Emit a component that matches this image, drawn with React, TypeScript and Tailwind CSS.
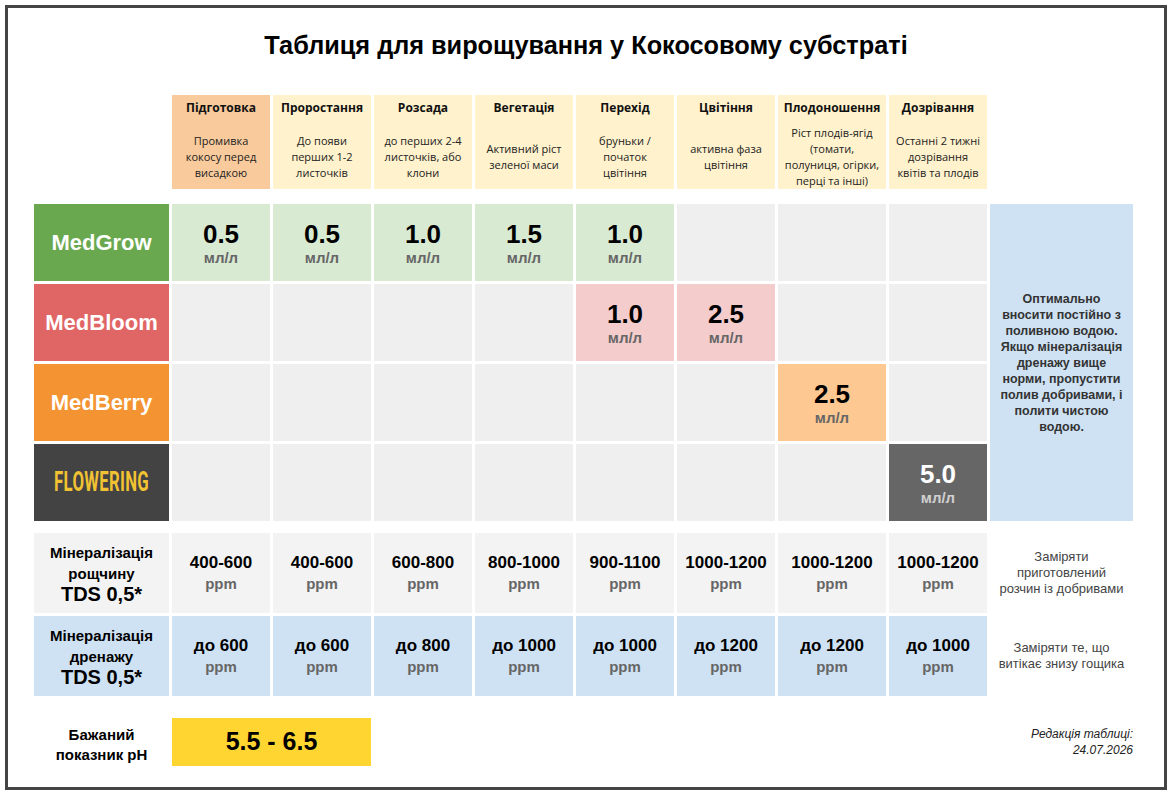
const stages = [
  { title: "Підготовка", lines: ["Промивка", "кокосу перед", "висадкою"], accent: true },
  { title: "Проростання", lines: ["До появи", "перших 1-2", "листочків"] },
  { title: "Розсада", lines: ["до перших 2-4", "листочків, або", "клони"] },
  { title: "Вегетація", lines: ["Активний ріст", "зеленої маси"] },
  { title: "Перехід", lines: ["бруньки /", "початок", "цвітіння"] },
  { title: "Цвітіння", lines: ["активна фаза", "цвітіння"] },
  { title: "Плодоношення", lines: ["Ріст плодів-ягід", "(томати,", "полуниця, огірки,", "перці та інші)"] },
  { title: "Дозрівання", lines: ["Останні 2 тижні", "дозрівання", "квітів та плодів"] },
];

type Product = {
  name: string;
  labelClass: string;
  cellClass: string;
  doses: (string | null)[];
  dark?: boolean;
};

const products: Product[] = [
  {
    name: "MedGrow",
    labelClass: "bg-[#6aa84f] text-white",
    cellClass: "bg-[#d9ead3]",
    doses: ["0.5", "0.5", "1.0", "1.5", "1.0", null, null, null],
  },
  {
    name: "MedBloom",
    labelClass: "bg-[#e06666] text-white",
    cellClass: "bg-[#f4cccc]",
    doses: [null, null, null, null, "1.0", "2.5", null, null],
  },
  {
    name: "MedBerry",
    labelClass: "bg-[#f39332] text-white",
    cellClass: "bg-[#fdc891]",
    doses: [null, null, null, null, null, null, "2.5", null],
  },
  {
    name: "FLOWERING",
    labelClass: "bg-[#434343] text-[#f1c232]",
    cellClass: "bg-[#666666]",
    doses: [null, null, null, null, null, null, null, "5.0"],
    dark: true,
  },
];

const solution = ["400-600", "400-600", "600-800", "800-1000", "900-1100", "1000-1200", "1000-1200", "1000-1200"];
const drainage = ["до 600", "до 600", "до 800", "до 1000", "до 1000", "до 1200", "до 1200", "до 1000"];

const noteLines = [
  "Оптимально",
  "вносити постійно з",
  "поливною водою.",
  "Якщо мінералізація",
  "дренажу вище",
  "норми, пропустити",
  "полив добривами, і",
  "полити чистою",
  "водою.",
];

const grid = "grid grid-cols-[135px_repeat(6,98px)_108px_98px_143px] gap-[3px]";

function Dose({ value, dark }: { value: string; dark?: boolean }) {
  return (
    <div className="flex flex-col items-center">
      <span className={`text-[26px] font-bold leading-[30px] ${dark ? "text-white" : "text-black"}`}>{value}</span>
      <span className={`text-[15px] font-bold leading-[18px] ${dark ? "text-[#d0d0d0]" : "text-[#666]"}`}>мл/л</span>
    </div>
  );
}

function Reading({ value }: { value: string }) {
  return (
    <div className="flex flex-col items-center">
      <span className="text-[17px] font-bold leading-[22px] text-black">{value}</span>
      <span className="text-[15px] font-bold leading-[20px] text-[#666]">ppm</span>
    </div>
  );
}

function ProductLabel({ product }: { product: Product }) {
  if (product.name === "FLOWERING") {
    return (
      <span className="inline-block scale-x-[0.62] font-['Roboto',sans-serif] text-[27px] font-bold leading-none tracking-[0.5px]">
        FLOWERING
      </span>
    );
  }
  return <span className="text-[22px] font-bold">{product.name}</span>;
}

export default function App() {
  return (
    <div className="h-[795px] w-full bg-white p-[5px] font-['Liberation_Sans',Arial,sans-serif] text-black">
      <div className="h-full border-[3px] border-[#444]">
        <h1 className="pt-[21px] text-center text-[25.3px] font-bold leading-[32px]">
          Таблиця для вирощування у Кокосовому субстраті
        </h1>

        <div className="ml-[26px] mt-[34px]">
          {/* stage headers */}
          <div className={`${grid} h-[94px]`}>
            <div />
            {stages.map((stage) => (
              <div
                key={stage.title}
                className={`flex flex-col font-['Open_Sans',sans-serif] ${stage.accent ? "bg-[#f9cb9c]" : "bg-[#fff2cc]"}`}
              >
                <div className="h-[30px] pt-[5px] text-center text-[12px] font-bold leading-[16px] text-[#111]">
                  {stage.title}
                </div>
                <div className="flex flex-1 items-center justify-center">
                  <p className="whitespace-nowrap text-center text-[11px] leading-[16px] text-[#222]">
                    {stage.lines.map((line, i) => (
                      <span key={i} className="block">
                        {line}
                      </span>
                    ))}
                  </p>
                </div>
              </div>
            ))}
            <div />
          </div>

          {/* dosage */}
          <div className={`${grid} mt-[15px] grid-rows-[repeat(4,77px)]`}>
            {products.map((product, row) => (
              <div key={product.name} className="contents">
                <div className={`flex items-center justify-center ${product.labelClass}`}>
                  <ProductLabel product={product} />
                </div>
                {product.doses.map((dose, i) => (
                  <div
                    key={i}
                    className={`flex items-center justify-center ${dose ? product.cellClass : "bg-[#efefef]"}`}
                  >
                    {dose ? <Dose value={dose} dark={product.dark} /> : null}
                  </div>
                ))}
                {row === 0 ? (
                  <div className="row-span-4 flex items-center justify-center bg-[#cfe2f3]">
                    <p className="text-center text-[12.5px] font-bold leading-[16px] text-[#333]">
                      {noteLines.map((line) => (
                        <span key={line} className="block">
                          {line}
                        </span>
                      ))}
                    </p>
                  </div>
                ) : null}
              </div>
            ))}
          </div>

          {/* TDS */}
          <div className={`${grid} mt-[12px] grid-rows-[repeat(2,80px)]`}>
            <div className="flex flex-col items-center justify-center bg-[#f3f3f3] font-bold">
              <span className="text-[15px] leading-[21px]">Мінералізація</span>
              <span className="text-[15px] leading-[21px]">рощчину</span>
              <span className="text-[20px] leading-[21px]">TDS 0,5*</span>
            </div>
            {solution.map((v, i) => (
              <div key={i} className="flex items-center justify-center bg-[#f3f3f3]">
                <Reading value={v} />
              </div>
            ))}
            <div className="flex items-center justify-center">
              <p className="text-center text-[13px] leading-[16px] text-[#444]">
                Заміряти
                <br />
                приготовлений
                <br />
                розчин із добривами
              </p>
            </div>

            <div className="flex flex-col items-center justify-center bg-[#cfe2f3] font-bold">
              <span className="text-[15px] leading-[21px]">Мінералізація</span>
              <span className="text-[15px] leading-[21px]">дренажу</span>
              <span className="text-[20px] leading-[21px]">TDS 0,5*</span>
            </div>
            {drainage.map((v, i) => (
              <div key={i} className="flex items-center justify-center bg-[#cfe2f3]">
                <Reading value={v} />
              </div>
            ))}
            <div className="flex items-center justify-center">
              <p className="text-center text-[13px] leading-[16px] text-[#444]">
                Заміряти те, що
                <br />
                витікає знизу гощика
              </p>
            </div>
          </div>

          {/* pH */}
          <div className={`${grid} mt-[22px] h-[48px]`}>
            <div className="flex items-center justify-center pt-[6px]">
              <p className="text-center text-[15px] font-bold leading-[20px]">
                Бажаний
                <br />
                показник pH
              </p>
            </div>
            <div className="col-span-2 flex items-center justify-center bg-[#ffd631]">
              <span className="text-[25px] font-bold">5.5 - 6.5</span>
            </div>
            <div className="col-span-6" />
            <div className="flex items-center justify-end">
              <p className="text-right text-[12px] italic leading-[16px] text-[#222]">
                Редакція таблиці:
                <br />
                24.07.2026
              </p>
            </div>
          </div>
        </div>
      </div>
    </div>
  );
}
